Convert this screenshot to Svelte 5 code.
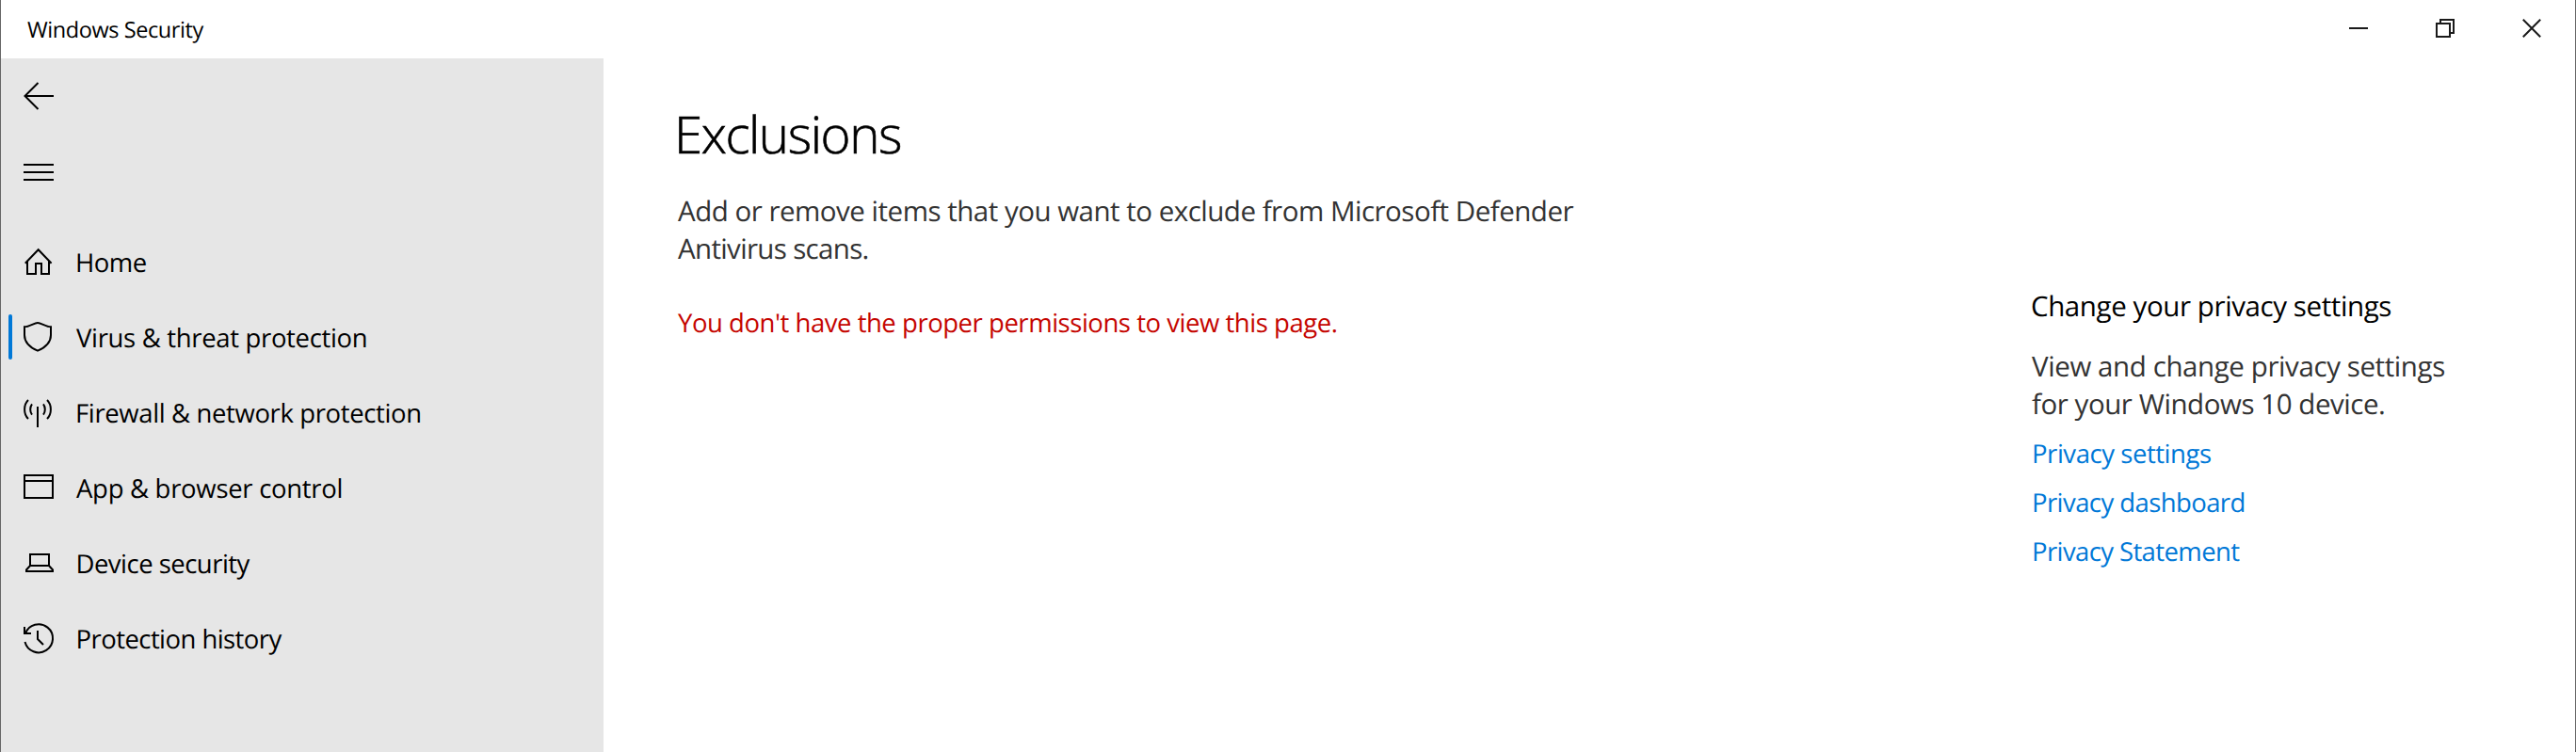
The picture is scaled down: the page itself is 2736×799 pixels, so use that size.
<script>
  const nav = [
    { label: 'Home', ls: -0.51, x: 80, d: 'M26.8 40.7L40.7 26.2L54.6 40.7M29 38.5V52H38V41H44V52H52V38.5' },
    { label: 'Virus & threat protection', ls: -0.33, x: 81, active: true, d: 'M26 28.3C31 28.3 36.5 24 40 24C43.5 24 49 28.3 54 28.3V37C54 45 48.5 50 40 53.7C31.5 50 26 45 26 37Z' },
    { label: 'Firewall & network protection', ls: -0.375, x: 80, d: 'M40 33V55M30 26C24.8 31 24.8 41 30 46M34 30.3C31.6 33.5 31.6 38.5 34 41.7M50 26C55.2 31 55.2 41 50 46M46 30.3C48.4 33.5 48.4 38.5 46 41.7' },
    { label: 'App & browser control', ls: -0.29, x: 81, d: 'M26 26H56V50H26ZM26 32H56' },
    { label: 'Device security', ls: -0.52, x: 80.5, d: 'M32 42V30H52V42M32 42H52L56 46.5V48H28V46.5Z' },
    { label: 'Protection history', ls: -0.56, x: 80.5, d: 'M26.5 43A15 15 0 1 0 27 34M26 27V34H33M40 31V40L46 46' }
  ];
  const links = [
    { label: 'Privacy settings', ls: -0.45 },
    { label: 'Privacy dashboard', ls: -0.58 },
    { label: 'Privacy Statement', ls: -0.61 }
  ];
</script>

<div class="window">
  <header>
    <span class="title">Windows Security</span>
    <div class="controls">
      <button aria-label="Minimize"><svg width="20" height="20" viewBox="0 0 20 20"><path d="M0 10H20" /></svg></button>
      <button aria-label="Restore"><svg width="20" height="20" viewBox="0 0 20 20"><path d="M1 5H15V19H1ZM5 5V1H19V15H15" /></svg></button>
      <button aria-label="Close"><svg width="20" height="20" viewBox="0 0 20 20"><path d="M.8 .8L19.2 19.2M19.2 .8L.8 19.2" /></svg></button>
    </div>
  </header>
  <div class="body">
    <aside>
      <button class="tool" aria-label="Back"><svg width="40" height="80" viewBox="20 0 40 80"><path d="M57 40H26.5M40.5 26L26.5 40L40.5 54" /></svg></button>
      <button class="tool menu" aria-label="Menu"><svg width="40" height="80" viewBox="20 0 40 80"><path d="M25 32H57M25 40H57M25 48H57" /></svg></button>
      <nav>
        {#each nav as item}
          <div class="item" class:active={item.active}>
            <svg width="40" height="80" viewBox="20 0 40 80"><path d={item.d} /></svg>
            <span style="letter-spacing: {item.ls}px; margin-left: {item.x - 60}px">{item.label}</span>
          </div>
        {/each}
      </nav>
    </aside>
    <main>
      <h1>Exclusions</h1>
      <p class="desc">Add or remove items that you want to exclude from Microsoft Defender<br /><span class="second">Antivirus scans.</span></p>
      <p class="error">You don't have the proper permissions to view this page.</p>
    </main>
    <section>
      <h2>Change your privacy settings</h2>
      <p>View and change privacy settings<br /><span class="device">for your Windows 10 device.</span></p>
      <div class="links">
        {#each links as link}
          <a href="#privacy" style="letter-spacing: {link.ls}px">{link.label}</a>
        {/each}
      </div>
    </section>
  </div>
</div>

<style>
  .window {
    box-sizing: border-box;
    width: 2736px;
    height: 799px;
    border: solid #666;
    border-width: 0 1px;
    background: #fff;
    color: #000;
    font-family: "Open Sans", "Noto Sans", sans-serif;
    text-rendering: geometricPrecision;
    display: flex;
    flex-direction: column;
    overflow: hidden;
  }
  h1, h2, p { margin: 0; font-weight: 400; white-space: nowrap; }
  button { border: 0; padding: 0; background: none; display: block; }
  svg { display: block; fill: none; stroke: #000; stroke-width: 2; flex: none; }
  header { height: 62px; display: flex; justify-content: space-between; }
  .title { padding-left: 28px; font-size: 23.5px; line-height: 62px; letter-spacing: -0.42px; }
  .controls { display: flex; }
  .controls button { width: 92px; height: 60px; display: grid; place-items: center; }
  .controls svg { stroke: #1a1a1a; }
  .body { flex: 1; display: flex; min-height: 0; }
  aside { width: 640px; background: #e6e6e6; }
  .tool { height: 80px; padding-left: 19px; }
  .menu { margin-top: 1px; }
  nav { padding-top: 16px; }
  .item { position: relative; display: flex; align-items: center; height: 80px; padding-left: 19px; font-size: 27.5px; line-height: 78px; white-space: nowrap; }
  .item span { padding-top: 2px; }
  .active::before { content: ""; position: absolute; left: 8px; top: 15px; width: 4px; height: 48px; border-radius: 2px; background: #0078d7; }
  main { width: 1516px; padding-left: 75px; box-sizing: border-box; }
  h1 { margin-top: 40px; font-size: 54.6px; line-height: 80px; font-weight: 300; letter-spacing: -1.43px; -webkit-text-stroke: 0.6px #000; }
  .desc { margin: 22px 0 0 4px; font-size: 29.5px; line-height: 40px; letter-spacing: -0.495px; color: #333; }
  .second { letter-spacing: -0.66px; }
  .error { margin: 40px 0 0 4px; font-size: 27.5px; line-height: 40px; letter-spacing: -0.465px; color: #c50500; }
  section { padding-top: 243px; font-size: 29.5px; line-height: 40px; letter-spacing: -0.406px; }
  h2 { font-size: inherit; }
  section p { margin: 24px 0 0 1px; color: #333; }
  .device { letter-spacing: -0.45px; }
  .links { display: flex; flex-direction: column; margin: 8px 0 0 1px; font-size: 27.5px; line-height: 52px; }
  a { color: #0078d7; text-decoration: none; }
</style>
